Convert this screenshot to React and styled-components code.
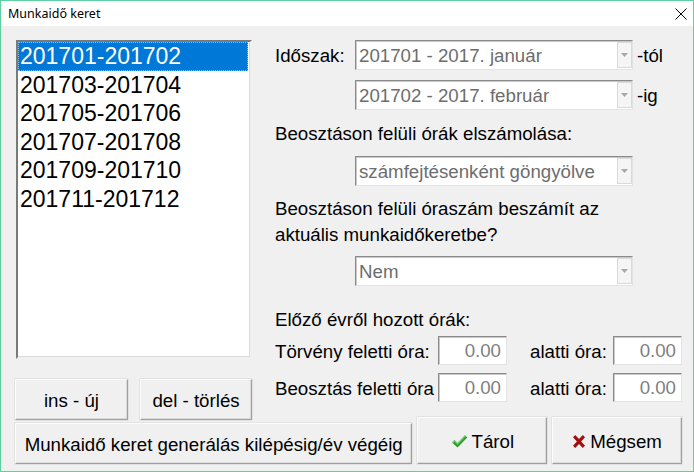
import React from 'react';
import styled, { createGlobalStyle } from 'styled-components';

const GlobalStyle = createGlobalStyle`
  html, body { margin: 0; padding: 0; background: #f0f0f0; }
  body { font-family: "Liberation Sans", Arial, sans-serif; }
`;

const periods = [
    '201701-201702',
    '201703-201704',
    '201705-201706',
    '201707-201708',
    '201709-201710',
    '201711-201712',
];

const Window = styled.div`
  width: 694px;
  height: 472px;
  box-sizing: border-box;
  border: 1px solid #5fd0a2;
  background: #f0f0f0;
  display: flex;
  flex-direction: column;
  overflow: hidden;
`;

const TitleBar = styled.div`
  height: 25px;
  background: #fff;
  display: flex;
  align-items: center;
  justify-content: space-between;
  padding: 0 4px 0 7px;
  font-family: "Noto Sans", "Liberation Sans", sans-serif;
  font-size: 12.5px;
  color: #000;
`;

const CloseBtn = styled.span`
  display: flex;
  width: 12px;
  height: 12px;
  margin-right: 2px;
`;

const Body = styled.div`
  flex: 1;
  padding: 14px 11px 0 14px;
  display: flex;
  flex-direction: column;
  font-size: 18.7px;
  color: #000;
`;

const Top = styled.div`
  display: flex;
  height: 380px;
  gap: 23px;
`;

const LeftCol = styled.div`
  width: 237px;
  display: flex;
  flex-direction: column;
  gap: 20px;
`;

const List = styled.div`
  margin-left: 1px;
  height: 322px;
  box-sizing: border-box;
  background: #fff;
  border: 2px solid;
  border-color: #7a7a7a #f0f0f0 #f0f0f0 #7a7a7a;
  box-shadow: inset -1px -1px 0 #dcdcdc;
`;

const ListItem = styled.div`
  height: 28.5px;
  line-height: 29.5px;
  font-size: 23px;
  padding-left: 2px;
  margin-right: 2px;
  white-space: nowrap;
  color: ${p => (p.$active ? '#fff' : '#000')};
  background: ${p => (p.$active ? '#0078d7' : 'transparent')};
  outline: ${p => (p.$active ? '1px dotted rgba(255,255,255,0.55)' : 'none')};
  outline-offset: -1px;
`;

const ButtonRow = styled.div`
  display: flex;
  gap: 12px;
`;

const Button = styled.button`
  height: ${p => p.$h || 41}px;
  width: ${p => p.$w}px;
  box-sizing: border-box;
  background: #f0f0f0;
  border: 1px solid;
  border-color: #fcfcfc #a0a0a0 #a0a0a0 #fcfcfc;
  box-shadow: inset -1px -1px 0 #dadada, 0 0 0 0.5px #d4d4d4;
  font-family: "Liberation Sans", Arial, sans-serif;
  font-size: 18.7px;
  color: #000;
  display: flex;
  align-items: center;
  justify-content: center;
  gap: 4px;
  padding: 2px 0 0;
  white-space: nowrap;
`;

const RightCol = styled.div`
  flex: 1;
  display: flex;
  flex-direction: column;
`;

const Row = styled.div`
  display: flex;
  align-items: center;
  height: ${p => p.$h || 30}px;
  margin-top: ${p => p.$mt || 0}px;
`;

const RowLabel = styled.span`
  width: ${p => p.$w || 80}px;
  padding-left: ${p => p.$pl || 0}px;
  padding-top: 2px;
  box-sizing: border-box;
  flex: none;
  white-space: nowrap;
`;

const Suffix = styled.span`
  margin-left: 4px;
  padding-top: 2px;
`;

const Label = styled.div`
  margin-top: ${p => p.$mt || 0}px;
  line-height: ${p => p.$lh || 24}px;
`;

const Combo = styled.div`
  width: 278px;
  height: 100%;
  box-sizing: border-box;
  background: #fff;
  border: 1px solid;
  border-color: #8a8a8a #e3e3e3 #e3e3e3 #8a8a8a;
  box-shadow: inset 1px 1px 0 #c9c9c9;
  display: flex;
  align-items: stretch;
`;

const ComboText = styled.span`
  flex: 1;
  color: #6d6d6d;
  padding: 2px 0 0 3px;
  display: flex;
  align-items: center;
  white-space: nowrap;
  overflow: hidden;
`;

const ComboArrow = styled.span`
  width: 15px;
  margin: 1px 0;
  box-sizing: border-box;
  background: #f5f5f5;
  border: 1px solid #dadada;
  display: flex;
  align-items: center;
  justify-content: center;
`;

const NumBox = styled.div`
  width: 69px;
  height: 29px;
  box-sizing: border-box;
  background: #fff;
  border: 1px solid;
  border-color: #8a8a8a #e3e3e3 #e3e3e3 #8a8a8a;
  box-shadow: inset 1px 1px 0 #c9c9c9;
  color: #808080;
  text-align: right;
  line-height: 27px;
  padding-right: 5px;
`;

const Bottom = styled.div`
  display: flex;
  align-items: flex-end;
  gap: 5px;
  margin-top: -3px;
  height: 47px;
`;

const ArrowDown = () => (
    <svg width="7" height="4" viewBox="0 0 7 4">
        <path d="M0 0h7L3.5 4z" fill="#a8a8a8" />
    </svg>
);

const Select = ({ value }) => (
    <Combo>
        <ComboText>{value}</ComboText>
        <ComboArrow><ArrowDown /></ComboArrow>
    </Combo>
);

const CheckIcon = () => (
    <svg width="17" height="15" viewBox="0 0 17 15">
        <path d="M1 8.5l2.5-2.5 3 3L14 1.2l2.3 2.2L6.5 13.6z" fill="#2f9e2f" />
        <path d="M1 8.5l2.5-2.5 3 3L14 1.2l0.8 0.8L6.5 10.8 3.5 7.6 2 9.2z" fill="#7fd07f" />
    </svg>
);

const XIcon = () => (
    <svg width="14" height="15" viewBox="0 0 14 15">
        <path d="M1 3.2L3.2 1 7 4.9 10.8 1 13 3.2 9.1 7.5 13 11.8 10.8 14 7 10.1 3.2 14 1 11.8 4.9 7.5z" fill="#a30f0f" />
    </svg>
);

const App = () => {
    return (
        <>
            <GlobalStyle />
            <Window>
                <TitleBar>
                    <span>Munkaidő keret</span>
                    <CloseBtn>
                        <svg width="12" height="12" viewBox="0 0 12 12">
                            <path d="M0.5 0.5L11.5 11.5M11.5 0.5L0.5 11.5" stroke="#000" strokeWidth="1" />
                        </svg>
                    </CloseBtn>
                </TitleBar>
                <Body>
                    <Top>
                        <LeftCol>
                            <List>
                                {periods.map((p, i) => (
                                    <ListItem key={p} $active={i === 0}>{p}</ListItem>
                                ))}
                            </List>
                            <ButtonRow>
                                <Button $w={113}>ins - új</Button>
                                <Button $w={112}>del - törlés</Button>
                            </ButtonRow>
                        </LeftCol>
                        <RightCol>
                            <Row>
                                <RowLabel>Időszak:</RowLabel>
                                <Select value="201701 - 2017. január" />
                                <Suffix>-tól</Suffix>
                            </Row>
                            <Row $mt={10}>
                                <RowLabel />
                                <Select value="201702 - 2017. február" />
                                <Suffix>-ig</Suffix>
                            </Row>
                            <Label $mt={12}>Beosztáson felüli órák elszámolása:</Label>
                            <Row $mt={10}>
                                <RowLabel />
                                <Select value="számfejtésenként göngyölve" />
                            </Row>
                            <Label $mt={10} $lh={26}>
                                Beosztáson felüli óraszám beszámít az<br />aktuális munkaidőkeretbe?
                            </Label>
                            <Row $mt={8}>
                                <RowLabel />
                                <Select value="Nem" />
                            </Row>
                            <Label $mt={22}>Előző évről hozott órák:</Label>
                            <Row $h={29} $mt={4}>
                                <RowLabel $w={163}>Törvény feletti óra:</RowLabel>
                                <NumBox>0.00</NumBox>
                                <RowLabel $w={106} $pl={23}>alatti óra:</RowLabel>
                                <NumBox>0.00</NumBox>
                            </Row>
                            <Row $h={29} $mt={8}>
                                <RowLabel $w={163}>Beosztás feletti óra</RowLabel>
                                <NumBox>0.00</NumBox>
                                <RowLabel $w={106} $pl={23}>alatti óra:</RowLabel>
                                <NumBox>0.00</NumBox>
                            </Row>
                        </RightCol>
                    </Top>
                    <Bottom>
                        <Button $w={398}>Munkaidő keret generálás kilépésig/év végéig</Button>
                        <Button $w={130} $h={47}><CheckIcon />Tárol</Button>
                        <Button $w={130} $h={47}><XIcon />Mégsem</Button>
                    </Bottom>
                </Body>
            </Window>
        </>
    );
};

export default App;
